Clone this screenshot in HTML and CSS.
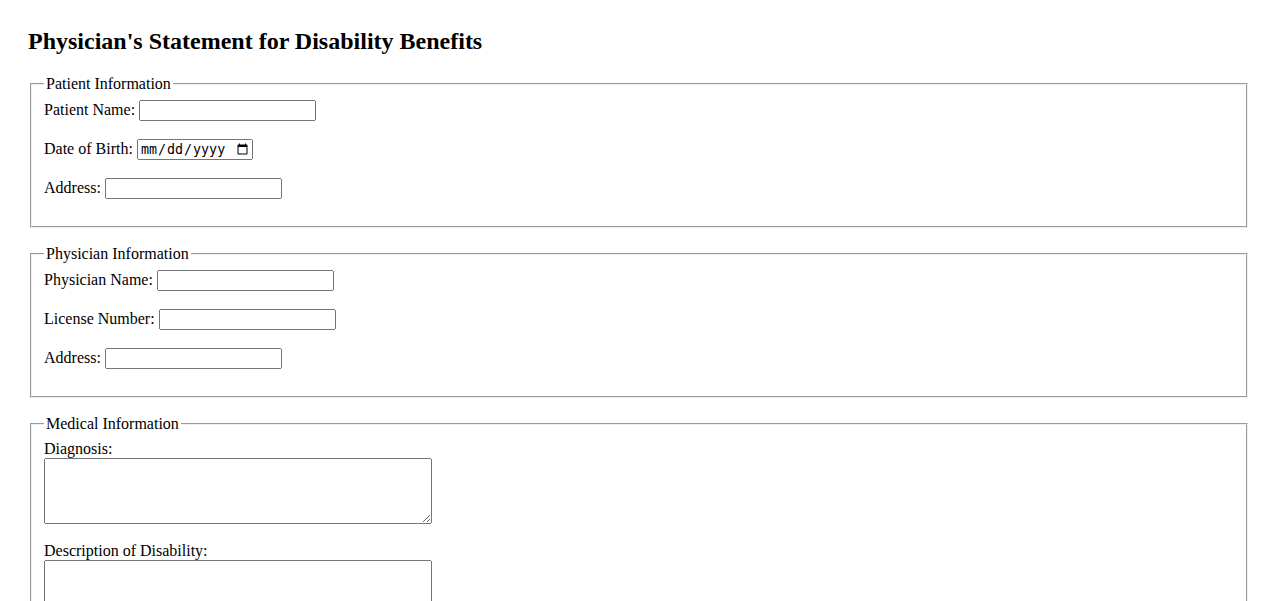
FILE: index.html
```html
<!DOCTYPE html>
<html>
<head>
    <meta charset="UTF-8">
    <title>Physician's Statement</title>
    <link rel="stylesheet" href="styles.css">
</head>
<body>
    <h2 class="title">Physician's Statement for Disability Benefits</h2>
    <form>
        <fieldset class="section">
            <legend>Patient Information</legend>
            <div class="row">
                <label for="patientName">Patient Name:</label>
                <input type="text" id="patientName" name="patientName">
            </div>
            <div class="row">
                <label for="dob">Date of Birth:</label>
                <input type="date" id="dob" name="dob">
            </div>
            <div class="row">
                <label for="patientAddress">Address:</label>
                <input type="text" id="patientAddress" name="patientAddress">
            </div>
        </fieldset>

        <fieldset class="section">
            <legend>Physician Information</legend>
            <div class="row">
                <label for="physicianName">Physician Name:</label>
                <input type="text" id="physicianName" name="physicianName">
            </div>
            <div class="row">
                <label for="license">License Number:</label>
                <input type="text" id="license" name="license">
            </div>
            <div class="row">
                <label for="physicianAddress">Address:</label>
                <input type="text" id="physicianAddress" name="physicianAddress">
            </div>
        </fieldset>

        <fieldset class="section">
            <legend>Medical Information</legend>
            <div class="row">
                <label for="diagnosis">Diagnosis:</label>
                <textarea id="diagnosis" name="diagnosis" rows="4"></textarea>
            </div>
            <div class="row">
                <label for="description">Description of Disability:</label>
                <textarea id="description" name="description" rows="4"></textarea>
            </div>
        </fieldset>
    </form>
</body>
</html>
```

FILE: styles.css
```css
body {
    margin: 0;
    padding: 28px;
    font-family: "Liberation Serif", "Times New Roman", serif;
    font-size: 16px;
    color: #000;
    background-color: #fff;
}
.title {
    font-size: 24px;
    margin: 0 0 20px 0;
}
.section {
    margin: 0 2px 17px;
    padding: 7px 12px 9px;
}
.row {
    margin-bottom: 18px;
}
input[type="text"] {
    width: 177px;
    height: 21px;
    box-sizing: border-box;
}
input[type="date"] {
    width: 116px;
    height: 21px;
    box-sizing: border-box;
}
textarea {
    display: block;
    width: 388px;
    height: 66px;
    box-sizing: border-box;
}
```
